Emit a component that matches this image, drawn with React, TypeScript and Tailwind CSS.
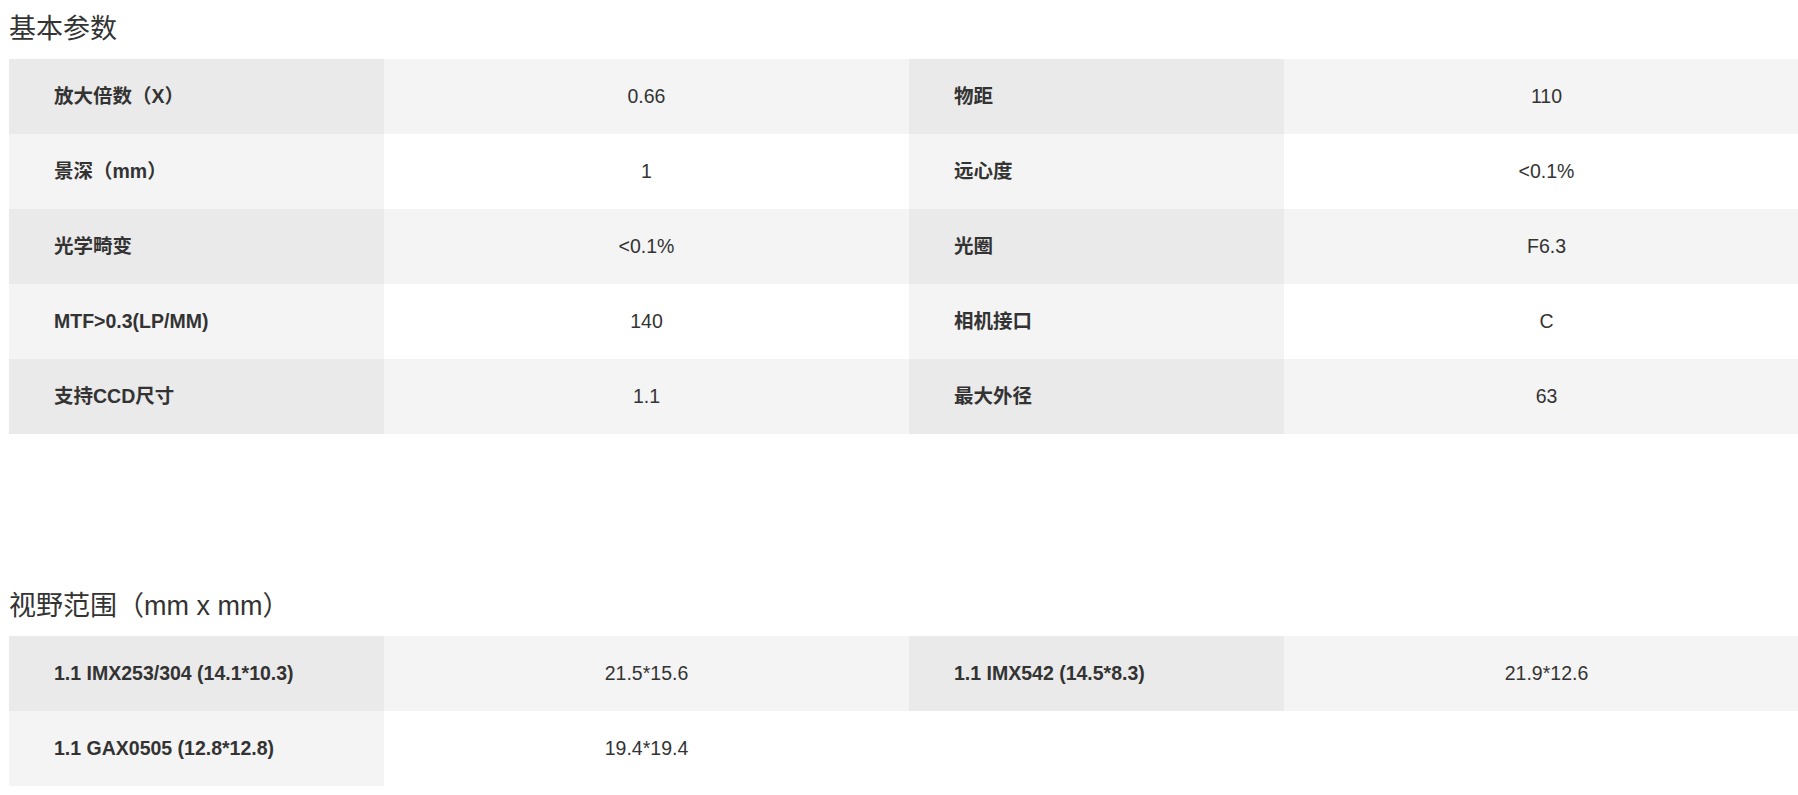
const basic: [string, string][][] = [
  [['放大倍数（X）', '0.66'], ['物距', '110']],
  [['景深（mm）', '1'], ['远心度', '<0.1%']],
  [['光学畸变', '<0.1%'], ['光圈', 'F6.3']],
  [['MTF>0.3(LP/MM)', '140'], ['相机接口', 'C']],
  [['支持CCD尺寸', '1.1'], ['最大外径', '63']],
];

const fov: [string, string][][] = [
  [['1.1 IMX253/304 (14.1*10.3)', '21.5*15.6'], ['1.1 IMX542 (14.5*8.3)', '21.9*12.6']],
  [['1.1 GAX0505 (12.8*12.8)', '19.4*19.4']],
];

function SpecTable({ rows }: { rows: [string, string][][] }) {
  return (
    <div className="w-[1800px]">
      {rows.map((row, i) => {
        const odd = i % 2 === 0;
        const labelBg = odd ? 'bg-[#eaeaea]' : 'bg-[#f4f4f4]';
        const valueBg = odd ? 'bg-[#f4f4f4]' : 'bg-white';
        return (
          <div key={i} className="flex h-[75px]">
            {row.map(([label, value], j) => (
              <div key={j} className="flex">
                <div className={`flex w-[375px] items-center pl-[45px] text-[19.5px] font-bold text-[#333] ${labelBg}`}>
                  {label}
                </div>
                <div className={`flex w-[525px] items-center justify-center text-[19.5px] text-[#333] ${valueBg}`}>
                  {value}
                </div>
              </div>
            ))}
          </div>
        );
      })}
    </div>
  );
}

function Title({ children }: { children: string }) {
  return (
    <h2 className="h-[59px] pt-[10px] text-[27px] leading-[38px] font-normal text-[#333]">
      {children}
    </h2>
  );
}

export default function App() {
  return (
    <div className="w-full overflow-hidden bg-white font-['Liberation_Sans','Noto_Sans_CJK_SC',sans-serif]">
      <div className="px-[9px]">
        <Title>基本参数</Title>
        <SpecTable rows={basic} />
        <div className="mt-[143px]">
          <Title>视野范围（mm x mm）</Title>
          <SpecTable rows={fov} />
        </div>
      </div>
    </div>
  );
}
